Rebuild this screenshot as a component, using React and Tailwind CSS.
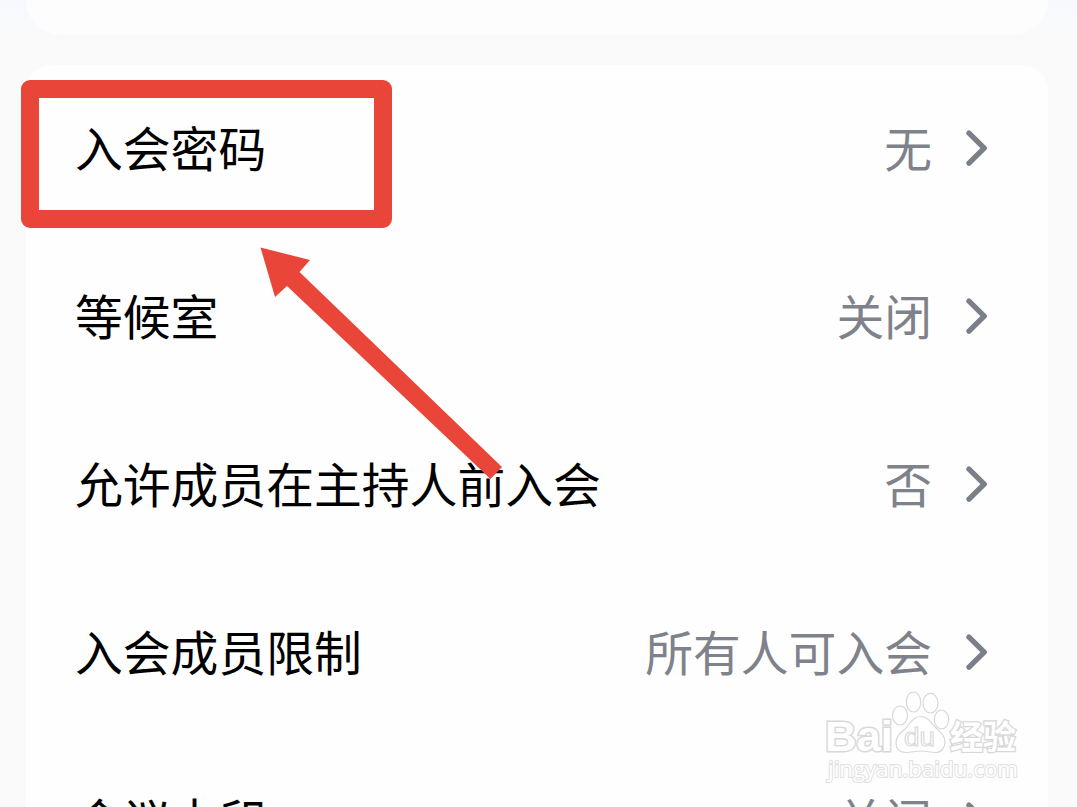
import React from "react";

const settings = [
  { label: "入会密码", value: "无" },
  { label: "等候室", value: "关闭" },
  { label: "允许成员在主持人前入会", value: "否" },
  { label: "入会成员限制", value: "所有人可入会" },
  { label: "会议水印", value: "关闭" },
];

const Chevron = () => (
  <svg width="26" height="40" viewBox="0 0 26 40" fill="none" className="ml-8 shrink-0">
    <path
      d="M5 4.2L20.2 19.2L5 34.2"
      stroke="#7b7f88"
      strokeWidth="5.4"
      strokeLinecap="round"
      strokeLinejoin="round"
    />
  </svg>
);

const SettingRow = ({ label, value }) => (
  <div className="flex h-[168px] shrink-0 items-center justify-between text-[47.8px] leading-none whitespace-nowrap">
    <span className="pb-1 text-black">{label}</span>
    <div className="flex items-center text-[#7f828a]">
      <span className="pb-1">{value}</span>
      <Chevron />
    </div>
  </div>
);

const Arrow = () => (
  <svg
    className="absolute top-[240px] left-[250px]"
    width="260"
    height="250"
    viewBox="250 240 260 250"
  >
    <path
      d="M260.5 247.5L310 260L299.5 272L502 467L490.5 479L287 286L275 297Z"
      fill="#e94639"
    />
  </svg>
);

const Watermark = () => (
  <svg
    className="absolute top-[685px] left-[820px]"
    width="210"
    height="105"
    viewBox="820 685 210 105"
    fill="#ffffff"
    stroke="#d8d8d8"
    strokeWidth="1.2"
  >
    <text
      x="825"
      y="751"
      fontSize="43"
      fontWeight="bold"
      fontFamily="Liberation Sans, sans-serif"
      textLength="68"
      lengthAdjust="spacingAndGlyphs"
      paintOrder="stroke"
      strokeWidth="3"
    >
      Bai
    </text>
    <ellipse cx="900" cy="715.5" rx="7.5" ry="9.5" />
    <ellipse cx="913.5" cy="702" rx="7.2" ry="10" />
    <ellipse cx="930.5" cy="703.2" rx="7.5" ry="9.8" />
    <ellipse cx="941.5" cy="719.5" rx="7.2" ry="9.5" />
    <path d="M920.5 716.5C913 716.5 910 724 905 729C899 734 896 737 896 743C896 749 900 752.5 906 752.5C912 752.5 915 751 921 751C927 751 930 752.5 936 752.5C941 752.5 945 748 945 742C945 736 941 733 936 728C931 723 928 716.5 920.5 716.5Z" />
    <text
      x="904"
      y="746"
      fontSize="25"
      fontFamily="Liberation Sans, sans-serif"
      textLength="31"
      lengthAdjust="spacingAndGlyphs"
      strokeWidth="1"
    >
      du
    </text>
    <text
      x="950"
      y="749"
      fontSize="33"
      fontWeight="bold"
      fontFamily="Noto Sans CJK SC, sans-serif"
      paintOrder="stroke"
      strokeWidth="2.6"
    >
      经验
    </text>
    <text
      x="828"
      y="777"
      fontSize="22"
      fontFamily="Open Sans, sans-serif"
      textLength="190"
      lengthAdjust="spacingAndGlyphs"
      paintOrder="stroke"
      stroke="#e0e0e0"
      strokeWidth="2"
    >
      jingyan.baidu.com
    </text>
  </svg>
);

const App = () => {
  return (
    <div className="relative flex h-[807px] w-[1077px] flex-col overflow-hidden bg-[#fafafa] bg-linear-to-b from-[#f7f9fe] to-[#fafafa] to-[50px] pr-[29px] pl-[26px] font-['Noto_Sans_CJK_SC',sans-serif]">
      <div className="h-[35px] shrink-0 rounded-b-[36px] bg-[#fdfdfe]" />
      <div className="mt-[30px] flex h-[742px] shrink-0 flex-col overflow-hidden rounded-t-[26px] bg-[#fefefe] pr-[58px] pl-[49px]">
        {settings.map((item) => (
          <SettingRow key={item.label} label={item.label} value={item.value} />
        ))}
      </div>

      <div className="absolute top-[80px] left-[21px] h-[148px] w-[371px] rounded-[9px] border-[18px] border-[#e94639]" />
      <Arrow />
      <Watermark />
    </div>
  );
};

export default App;
